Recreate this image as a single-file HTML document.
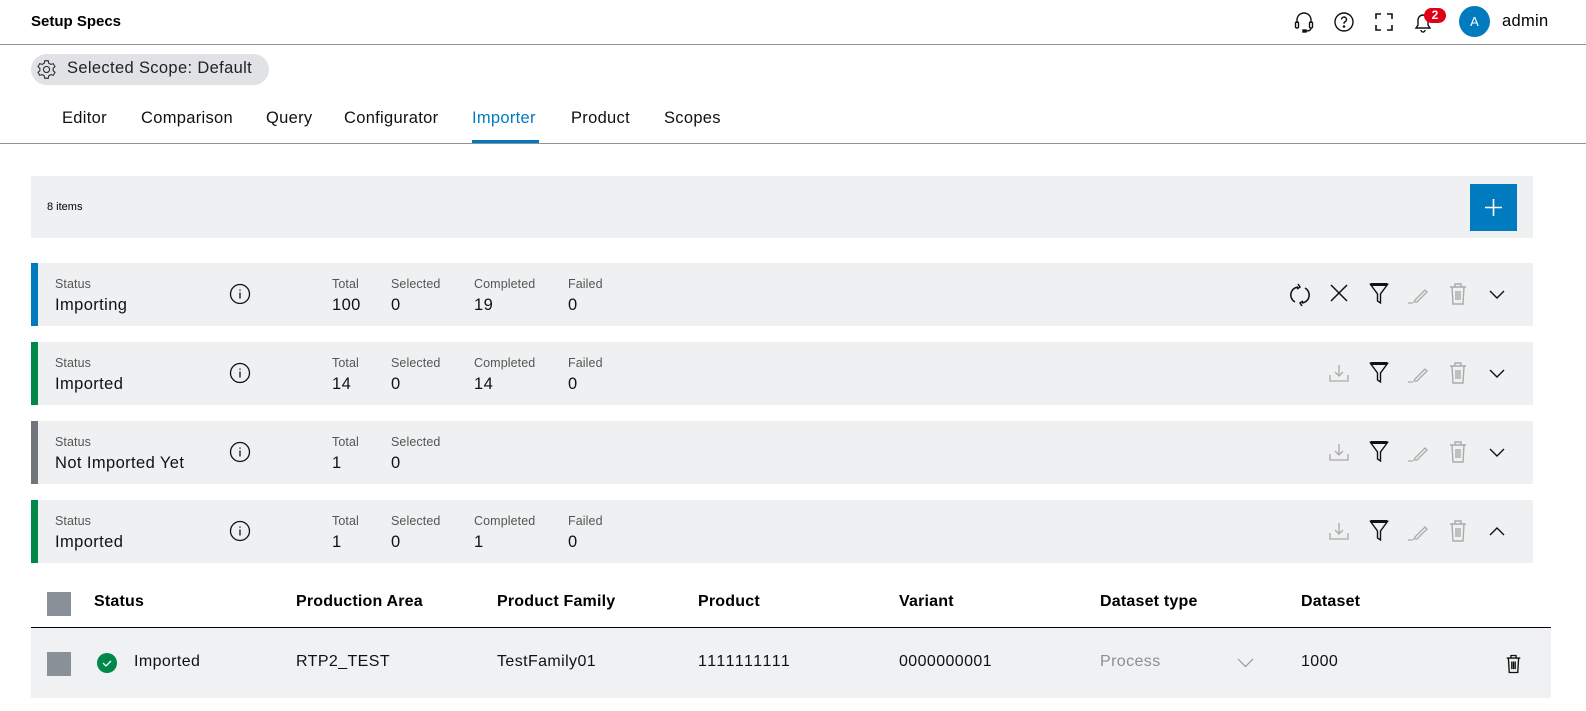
<!DOCTYPE html>
<html><head><meta charset="utf-8"><style>
*{box-sizing:border-box;margin:0;padding:0}
body{width:1586px;height:711px;overflow:hidden;background:#fff;font-family:"Liberation Sans",sans-serif;color:#000;position:relative}
.a{position:absolute}
.hdr{left:0;top:0;width:1586px;height:45px;border-bottom:1px solid #8f9194}
.tabs span{position:absolute;top:109px;font-size:16.5px;color:#111;letter-spacing:.3px}
.card{left:31px;width:1502px;height:63px;background:#eff0f1}
.card .bar{position:absolute;left:0;top:0;width:7px;height:63px}
.lbl{position:absolute;font-size:12.5px;color:#555;top:14px;letter-spacing:.1px}
.val{position:absolute;font-size:16.5px;color:#111;top:33px;letter-spacing:.4px}
.ic{position:absolute;top:20px}
.th{position:absolute;top:593px;font-size:16px;font-weight:bold;letter-spacing:.2px}
.td{position:absolute;top:653px;font-size:16px;color:#111;letter-spacing:.4px}
</style></head><body>
<div class="a hdr"></div>
<div class="a" style="left:31px;top:13px;font-size:15px;font-weight:bold">Setup Specs</div>
<svg class="a" style="left:1292px;top:10px" width="24" height="24" viewBox="0 0 24 24" fill="none" stroke="#111" stroke-width="1.4"><path d="M5 13V10a7 7 0 0 1 14 0v3"/><rect x="3.5" y="12" width="3" height="6" rx="1.2"/><rect x="17.5" y="12" width="3" height="6" rx="1.2"/><path d="M19 18q0 3-5 3"/><rect x="11" y="20" width="3" height="2" fill="#111"/></svg>
<svg class="a" style="left:1333px;top:11px" width="22" height="22" viewBox="0 0 22 22" fill="none" stroke="#111" stroke-width="1.4"><circle cx="11" cy="11" r="9"/><path d="M8.5 8.5a2.5 2.5 0 1 1 3.5 2.3c-.8.4-1 1-1 2"/><circle cx="11" cy="15.5" r=".6" fill="#111"/></svg>
<svg class="a" style="left:1375px;top:13px" width="18" height="18" viewBox="0 0 18 18" fill="none" stroke="#111" stroke-width="1.6"><path d="M1 6V1h5M12 1h5v5M17 12v5h-5M6 17H1v-5"/></svg>
<svg class="a" style="left:1412px;top:11px" width="22" height="22" viewBox="0 0 22 22" fill="none" stroke="#111" stroke-width="1.4"><path d="M4 17h14l-2-3v-5a5 5 0 0 0-10 0v5z"/><path d="M9 19a2 2 0 0 0 4 0"/></svg>
<div class="a" style="left:1424px;top:8px;width:22px;height:15px;border-radius:8px;background:#e20015;color:#fff;font-size:12px;font-weight:bold;text-align:center;line-height:15px">2</div>
<div class="a" style="left:1459px;top:6px;width:31px;height:31px;border-radius:50%;background:#007bc0;color:#fff;font-size:13px;text-align:center;line-height:31px">A</div>
<div class="a" style="left:1502px;top:12px;font-size:16.5px;letter-spacing:.3px">admin</div>
<div class="a" style="left:31px;top:54px;width:238px;height:31px;border-radius:16px;background:#e0e2e5"></div>
<svg class="a" style="left:36px;top:59px" width="21" height="21" viewBox="0 0 24 24" fill="none" stroke="#333" stroke-width="1.3"><circle cx="12" cy="12" r="3.5"/><path d="M10 2h4l.6 2.8 2.4 1.4 2.7-.9 2 3.4-2.1 1.9v2.8l2.1 1.9-2 3.4-2.7-.9-2.4 1.4L14 22h-4l-.6-2.8-2.4-1.4-2.7.9-2-3.4 2.1-1.9v-2.8L2.3 8.7l2-3.4 2.7.9 2.4-1.4z"/></svg>
<div class="a" style="left:67px;top:59px;font-size:16.5px;color:#222;letter-spacing:.35px">Selected Scope: Default</div>
<div class="tabs"><span style="left:62px">Editor</span><span style="left:141px">Comparison</span><span style="left:266px">Query</span><span style="left:344px">Configurator</span><span style="left:472px;color:#007bc0">Importer</span><span style="left:571px">Product</span><span style="left:664px">Scopes</span></div>
<div class="a" style="left:472px;top:140px;width:67px;height:3px;background:#007bc0"></div>
<div class="a" style="left:0;top:143px;width:1586px;height:1px;background:#8f9194"></div>
<div class="a" style="left:31px;top:176px;width:1502px;height:62px;background:#eff0f1"></div>
<div class="a" style="left:47px;top:201px;font-size:11px">8 items</div>
<div class="a" style="left:1470px;top:184px;width:47px;height:47px;background:#007bc0"></div>
<svg class="a" style="left:1484px;top:198px" width="19" height="19" viewBox="0 0 19 19" stroke="#fff" stroke-width="1.6"><path d="M9.5 1v17M1 9.5h17"/></svg>
<div id="cards"></div>
<script>
const cards=[
[263,'#007bc0','Importing',[['Total','100'],['Selected','0'],['Completed','19'],['Failed','0']],'refresh','down'],
[342,'#00884a','Imported',[['Total','14'],['Selected','0'],['Completed','14'],['Failed','0']],'dl','down'],
[421,'#71767c','Not Imported Yet',[['Total','1'],['Selected','0']],'dl','down'],
[500,'#00884a','Imported',[['Total','1'],['Selected','0'],['Completed','1'],['Failed','0']],'dl','up']];
const xs=[301,360,443,537];
const info='<svg class="ic" style="left:198px;top:20px" width="22" height="22" viewBox="0 0 22 22" fill="none" stroke="#111" stroke-width="1.3"><circle cx="11" cy="11" r="9.5"/><path d="M11 9.5v6M11 6.5v1.3"/></svg>';
const refresh='<svg class="ic" style="left:1257px" width="24" height="24" viewBox="0 0 24 24" fill="none" stroke="#111" stroke-width="1.5"><path d="M7 19A8 8 0 0 1 10 4"/><path d="M17 5a8 8 0 0 1-3 15"/><path d="M10 1l2 3-3 2M14 23l-2-3 3-2"/></svg><svg class="ic" style="left:1298px" width="20" height="20" viewBox="0 0 20 20" stroke="#111" stroke-width="1.5"><path d="M2 2l16 16M18 2L2 18"/></svg>';
const dl='<svg class="ic" style="left:1297px" width="22" height="22" viewBox="0 0 22 22" fill="none" stroke="#aaa" stroke-width="1.3"><path d="M2 13v6h18v-6M11 3v11M7 10l4 4 4-4"/></svg>';
const rest='<svg class="ic" style="left:1338px" width="20" height="22" viewBox="0 0 20 22" fill="none" stroke="#111" stroke-width="1.4"><path d="M1.5 1.5h17L11.5 11v9l-3-2v-7z"/><path d="M1.5 1.5h17" stroke-width="3"/></svg><svg class="ic" style="left:1376px" width="22" height="22" viewBox="0 0 22 22" fill="none" stroke="#aaa" stroke-width="1.3"><path d="M8 17l10-10 2 2-10 10H7zM1 20h5"/></svg><svg class="ic" style="left:1417px;top:19px" width="20" height="24" viewBox="0 0 20 24" fill="none" stroke="#aaa" stroke-width="1.4"><path d="M2 5h16M7 5V2h6v3M4 5l1 17h10l1-17M8 9v9M10 9v9M12 9v9"/></svg>';
let h='';
for(const [y,c,v,stats,a,ch] of cards){
 h+=`<div class="a card" style="top:${y}px"><div class="bar" style="background:${c}"></div><div class="lbl" style="left:24px">Status</div><div class="val" style="left:24px">${v}</div>${info}`;
 stats.forEach((s,i)=>{h+=`<div class="lbl" style="left:${xs[i]}px">${s[0]}</div><div class="val" style="left:${xs[i]}px">${s[1]}</div>`});
 h+=(a=='refresh'?refresh:dl)+rest;
 h+=`<svg class="ic" style="left:1458px;top:24px" width="16" height="14" viewBox="0 0 16 14" fill="none" stroke="#111" stroke-width="1.4"><path d="${ch=='down'?'M1 4l7 7 7-7':'M1 11l7-7 7 7'}"/></svg></div>`;
}
document.getElementById('cards').innerHTML=h;
</script>
<div class="a" style="left:47px;top:592px;width:24px;height:24px;background:#8a9097"></div>
<div class="th" style="left:94px">Status</div>
<div class="th" style="left:296px">Production Area</div>
<div class="th" style="left:497px">Product Family</div>
<div class="th" style="left:698px">Product</div>
<div class="th" style="left:899px">Variant</div>
<div class="th" style="left:1100px">Dataset type</div>
<div class="th" style="left:1301px">Dataset</div>
<div class="a" style="left:31px;top:627px;width:1520px;height:1px;background:#000"></div>
<div class="a" style="left:31px;top:628px;width:1520px;height:70px;background:#eff1f3"></div>
<div class="a" style="left:47px;top:652px;width:24px;height:24px;background:#8a9097"></div>
<svg class="a" style="left:97px;top:653px" width="20" height="20" viewBox="0 0 20 20"><circle cx="10" cy="10" r="10" fill="#00884a"/><path d="M6 10l3 3 5-5" stroke="#fff" stroke-width="1.3" fill="none"/></svg>
<div class="td" style="left:134px">Imported</div>
<div class="td" style="left:296px">RTP2_TEST</div>
<div class="td" style="left:497px">TestFamily01</div>
<div class="td" style="left:698px;letter-spacing:1.5px">1111111111</div>
<div class="td" style="left:899px">0000000001</div>
<div class="td" style="left:1100px;color:#8a8f94">Process</div>
<svg class="a" style="left:1237px;top:658px" width="17" height="10" viewBox="0 0 17 10" fill="none" stroke="#999" stroke-width="1.2"><path d="M1 1l7.5 7.5L16 1"/></svg>
<div class="td" style="left:1301px">1000</div>
<svg class="a" style="left:1505px;top:653px" width="17" height="22" viewBox="0 0 20 24" fill="none" stroke="#111" stroke-width="1.6"><path d="M2 5h16M7 5V2h6v3M4 5l1 17h10l1-17M8 9v9M10 9v9M12 9v9"/></svg>
</body></html>
